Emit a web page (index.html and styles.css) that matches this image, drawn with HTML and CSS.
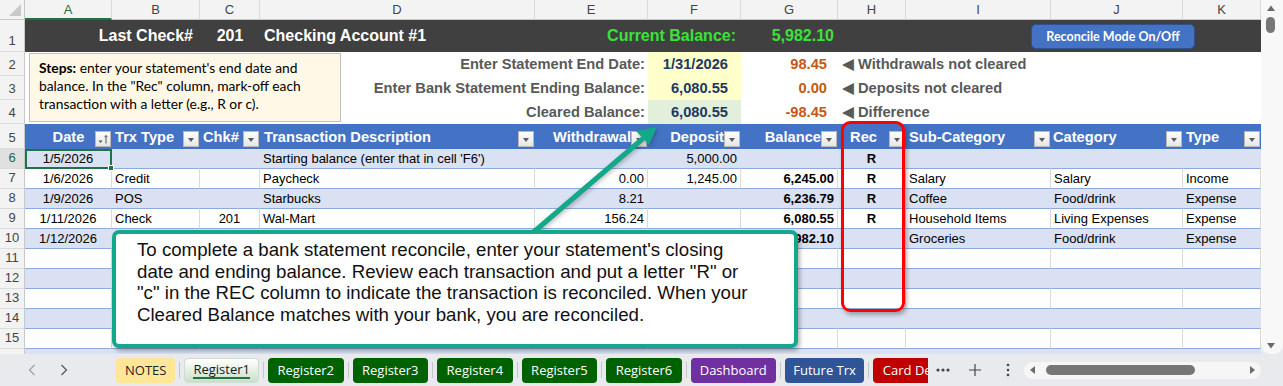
FILE: index.html
```html
<!DOCTYPE html>
<html lang="en">

<head>
    <meta charset="UTF-8">
    <meta name="viewport" content="width=device-width, initial-scale=1.0">
    <title>Checkbook Register</title>
    <link rel="stylesheet" href="styles.css">
</head>

<body>
    <div class="workbook">
        <div class="sheet-row">
            <div class="sheet">
                <table class="grid">
                    <colgroup>
                        <col class="w-rh"><col class="w-a"><col class="w-b"><col class="w-c"><col class="w-d"><col class="w-e">
                        <col class="w-f"><col class="w-g"><col class="w-h"><col class="w-i"><col class="w-j"><col class="w-k">
                    </colgroup>
                    <tr class="col-heads">
                        <th class="corner"><span class="corner-tri"></span></th>
                        <th class="cur">A</th><th>B</th><th>C</th><th>D</th><th>E</th><th>F</th>
                        <th>G</th><th>H</th><th>I</th><th>J</th><th>K</th>
                    </tr>
                    <tr class="r-title">
                        <th class="rh">1</th>
                        <td colspan="2" class="ttl-check">Last Check#</td>
                        <td class="ttl-num">201</td>
                        <td class="ttl-acct">Checking Account #1</td>
                        <td colspan="2" class="ttl-cur">Current Balance:</td>
                        <td class="ttl-bal">5,982.10</td>
                        <td></td>
                        <td colspan="3"><button class="rec-btn" type="button">Reconcile Mode On/Off</button></td>
                    </tr>
                    <tr class="r-info">
                        <th class="rh">2</th>
                        <td colspan="5" rowspan="3" class="info-left">
                            <div class="info-box">
                                <div class="steps"><b>Steps:</b> enter your statement's end date and balance. In the "Rec" column, mark-off each transaction with a letter (e.g., R or c).</div>
                                <div class="labels">
                                    <div>Enter Statement End Date:</div>
                                    <div>Enter Bank Statement Ending Balance:</div>
                                    <div>Cleared Balance:</div>
                                </div>
                            </div>
                        </td>
                        <td class="inp yellow">1/31/2026</td>
                        <td class="diff">98.45</td>
                        <td colspan="4" class="note"><span class="pointer">&#9664;</span> Withdrawals not cleared</td>
                    </tr>
                    <tr class="r-info">
                        <th class="rh">3</th>
                        <td class="inp yellow">6,080.55</td>
                        <td class="diff">0.00</td>
                        <td colspan="4" class="note"><span class="pointer">&#9664;</span> Deposits not cleared</td>
                    </tr>
                    <tr class="r-info">
                        <th class="rh">4</th>
                        <td class="inp green">6,080.55</td>
                        <td class="diff">-98.45</td>
                        <td colspan="4" class="note"><span class="pointer">&#9664;</span> Difference</td>
                    </tr>
                    <tr class="r-head">
                        <th class="rh">5</th>
                        <th><div class="hc"><span class="hc-txt t-date">Date</span><span class="fbtn sort"><svg width="14" height="14" viewBox="0 0 14 14"><path d="M2.5 8.5h4l-2 2.5z" fill="#555"/><path d="M10 3.5v8M8.6 5.2L10 3.5l1.4 1.7" stroke="#555" stroke-width="1" fill="none"/></svg></span></div></th>
                        <th><div class="hc"><span class="hc-txt t-left">Trx Type</span><span class="fbtn"></span></div></th>
                        <th><div class="hc"><span class="hc-txt t-left">Chk#</span><span class="fbtn"></span></div></th>
                        <th><div class="hc"><span class="hc-txt t-desc">Transaction Description</span><span class="fbtn"></span></div></th>
                        <th><div class="hc"><span class="hc-txt t-right">Withdrawal</span><span class="fbtn"></span></div></th>
                        <th><div class="hc"><span class="hc-txt t-right">Deposit</span><span class="fbtn"></span></div></th>
                        <th><div class="hc"><span class="hc-txt t-right">Balance</span><span class="fbtn"></span></div></th>
                        <th><div class="hc"><span class="hc-txt t-mid">Rec</span><span class="fbtn"></span></div></th>
                        <th><div class="hc"><span class="hc-txt t-left">Sub-Category</span><span class="fbtn"></span></div></th>
                        <th><div class="hc"><span class="hc-txt t-cat">Category</span><span class="fbtn"></span></div></th>
                        <th><div class="hc"><span class="hc-txt t-left">Type</span><span class="fbtn"></span></div></th>
                    </tr>
                    <tr class="r-data band">
                        <th class="rh rh-cur">6</th>
                        <td class="ctr active-cell">1/5/2026<span class="fill-handle"></span></td>
                        <td></td><td></td>
                        <td>Starting balance (enter that in cell 'F6')</td>
                        <td></td>
                        <td class="num">5,000.00</td>
                        <td></td>
                        <td class="ctr b">R</td>
                        <td></td><td></td><td></td>
                    </tr>
                    <tr class="r-data plain">
                        <th class="rh">7</th>
                        <td class="ctr">1/6/2026</td>
                        <td>Credit</td><td></td>
                        <td>Paycheck</td>
                        <td class="num">0.00</td>
                        <td class="num">1,245.00</td>
                        <td class="num b">6,245.00</td>
                        <td class="ctr b">R</td>
                        <td>Salary</td><td>Salary</td><td>Income</td>
                    </tr>
                    <tr class="r-data band">
                        <th class="rh">8</th>
                        <td class="ctr">1/9/2026</td>
                        <td>POS</td><td></td>
                        <td>Starbucks</td>
                        <td class="num">8.21</td>
                        <td></td>
                        <td class="num b">6,236.79</td>
                        <td class="ctr b">R</td>
                        <td>Coffee</td><td>Food/drink</td><td>Expense</td>
                    </tr>
                    <tr class="r-data plain">
                        <th class="rh">9</th>
                        <td class="ctr">1/11/2026</td>
                        <td>Check</td><td class="ctr">201</td>
                        <td>Wal-Mart</td>
                        <td class="num">156.24</td>
                        <td></td>
                        <td class="num b">6,080.55</td>
                        <td class="ctr b">R</td>
                        <td>Household Items</td><td>Living Expenses</td><td>Expense</td>
                    </tr>
                    <tr class="r-data band">
                        <th class="rh">10</th>
                        <td class="ctr">1/12/2026</td>
                        <td></td><td></td>
                        <td></td>
                        <td></td>
                        <td></td>
                        <td class="num b">5,982.10</td>
                        <td></td>
                        <td>Groceries</td><td>Food/drink</td><td>Expense</td>
                    </tr>
                    <tr class="r-data plain"><th class="rh">11</th><td></td><td></td><td></td><td></td><td></td><td></td><td></td><td></td><td></td><td></td><td></td></tr>
                    <tr class="r-data band"><th class="rh">12</th><td></td><td></td><td></td><td></td><td></td><td></td><td></td><td></td><td></td><td></td><td></td></tr>
                    <tr class="r-data plain"><th class="rh">13</th><td></td><td></td><td></td><td></td><td></td><td></td><td></td><td></td><td></td><td></td><td></td></tr>
                    <tr class="r-data band"><th class="rh">14</th><td></td><td></td><td></td><td></td><td></td><td></td><td></td><td></td><td></td><td></td><td></td></tr>
                    <tr class="r-data plain"><th class="rh">15</th><td></td><td></td><td></td><td></td><td></td><td></td><td></td><td></td><td></td><td></td><td></td></tr>
                    <tr class="r-data band"><th class="rh"></th><td></td><td></td><td></td><td></td><td></td><td></td><td></td><td></td><td></td><td></td><td></td></tr>
                </table>

                <!-- callout pointing at the cleared balance -->
                <svg class="arrow" width="1261" height="354" viewBox="0 0 1261 354">
                    <line x1="529" y1="236" x2="643" y2="138.5" stroke="#13a88a" stroke-width="5"/>
                    <polygon points="657,127 649,145 636,131" fill="#13a88a"/>
                </svg>
                <div class="red-box"></div>
                <div class="callout">To complete a bank statement reconcile, enter your statement's closing date and ending balance. Review each transaction and put a letter "R" or "c" in the REC column to indicate the transaction is reconciled. When your Cleared Balance matches with your bank, you are reconciled.</div>
            </div>
            <div class="vscroll">
                <svg class="vs-up" width="10" height="8" viewBox="0 0 10 8"><path d="M1 7L5 1.5L9 7z" fill="#6b6b6b"/></svg>
                <div class="vs-thumb"></div>
                <svg class="vs-down" width="10" height="8" viewBox="0 0 10 8"><path d="M1 1L5 6.5L9 1z" fill="#6b6b6b"/></svg>
            </div>
        </div>

        <div class="tabbar">
            <div class="tab-nav">
                <svg width="8" height="12" viewBox="0 0 8 12"><path d="M6.5 1L1.5 6l5 5" stroke="#a0a0a0" stroke-width="1.2" fill="none"/></svg>
                <svg width="8" height="12" viewBox="0 0 8 12"><path d="M1.5 1l5 5-5 5" stroke="#555" stroke-width="1.2" fill="none"/></svg>
            </div>
            <div class="tabs">
                <span class="tab t-notes">NOTES</span><span class="sep"></span>
                <span class="tab t-active">Register1</span><span class="sep"></span>
                <span class="tab t-reg">Register2</span><span class="sep"></span>
                <span class="tab t-reg">Register3</span><span class="sep"></span>
                <span class="tab t-reg">Register4</span><span class="sep"></span>
                <span class="tab t-reg">Register5</span><span class="sep"></span>
                <span class="tab t-reg">Register6</span><span class="sep"></span>
                <span class="tab t-dash">Dashboard</span><span class="sep"></span>
                <span class="tab t-future">Future Trx</span><span class="sep"></span>
                <span class="tab t-card">Card Debt</span>
            </div>
            <div class="tab-tools">
                <svg width="96" height="20" viewBox="0 0 96 20">
                    <circle cx="10" cy="10" r="1.6" fill="#444"/><circle cx="15" cy="10" r="1.6" fill="#444"/><circle cx="20" cy="10" r="1.6" fill="#444"/>
                    <path d="M47 4v12M41 10h12" stroke="#444" stroke-width="1.2"/>
                    <circle cx="80" cy="5" r="1.3" fill="#444"/><circle cx="80" cy="10" r="1.3" fill="#444"/><circle cx="80" cy="15" r="1.3" fill="#444"/>
                </svg>
            </div>
            <div class="hscroll">
                <svg width="8" height="10" viewBox="0 0 8 10"><path d="M6 1L1 5l5 4z" fill="#6b6b6b"/></svg>
                <div class="hs-thumb"></div>
                <svg width="8" height="10" viewBox="0 0 8 10"><path d="M2 1l5 4-5 4z" fill="#6b6b6b"/></svg>
            </div>
        </div>
    </div>
</body>

</html>
```

FILE: styles.css
```css
* {
    box-sizing: border-box;
}

body {
    margin: 0;
    background-color: #e9eaed;
    font-family: "Liberation Sans", Arial, sans-serif;
}

.workbook {
    width: 1283px;
    height: 386px;
    overflow: hidden;
}

.sheet-row {
    display: flex;
    height: 354px;
}

.sheet {
    position: relative;
    width: 1261px;
    height: 354px;
    overflow: hidden;
    background-color: #fff;
}

/* grid */
.grid {
    table-layout: fixed;
    width: 1261px;
    border-collapse: separate;
    border-spacing: 0;
}

.grid td,
.grid th {
    padding: 0;
    white-space: nowrap;
}

.w-rh { width: 25px; }
.w-a { width: 87px; }
.w-b { width: 88px; }
.w-c { width: 60px; }
.w-d { width: 275px; }
.w-e { width: 113px; }
.w-f { width: 93px; }
.w-g { width: 97px; }
.w-h { width: 68px; }
.w-i { width: 145px; }
.w-j { width: 132px; }
.w-k { width: 78px; }

.col-heads th {
    height: 20px;
    background-color: #f3f3f3;
    border-right: 1px solid #dadada;
    border-bottom: 1px solid #c8c8c8;
    color: #444;
    font-weight: normal;
    font-size: 13px;
    text-align: center;
}

.col-heads th.cur {
    color: #1d6b40;
    border-bottom: 2px solid #217346;
}

.grid th.corner {
    vertical-align: bottom;
    border-right: 1px solid #c8c8c8;
}

.corner-tri {
    display: block;
    width: 0;
    height: 0;
    margin: 0 3px 3px auto;
    border-left: 12px solid transparent;
    border-bottom: 12px solid #c9c9c9;
}

.grid .rh {
    background-color: #f3f3f3;
    border-right: 1px solid #c8c8c8;
    border-bottom: 1px solid #dcdcdc;
    color: #444;
    font-weight: normal;
    font-size: 13px;
    line-height: 16px;
    vertical-align: bottom;
    padding-bottom: 2px;
    text-align: center;
}

.grid .rh-cur {
    background-color: #e0e0e0;
    color: #1d6b40;
}

/* row 1 */
.r-title td {
    height: 32px;
    background-color: #404040;
    color: #fff;
    font-weight: bold;
    font-size: 16px;
}

.grid .ttl-check {
    text-align: right;
    padding-right: 7px;
}

.ttl-num {
    text-align: center;
}

.grid .ttl-acct {
    padding-left: 4px;
}

.grid .ttl-cur {
    text-align: right;
    padding-right: 5px;
    color: #3ae23a;
}

.grid .ttl-bal {
    text-align: right;
    padding-right: 4px;
    color: #3ae23a;
}

.rec-btn {
    display: block;
    margin-left: 125px;
    width: 164px;
    height: 25px;
    padding: 0;
    background-color: #4472c4;
    border: 1px solid #2f528f;
    border-radius: 5px;
    color: #fff;
    font-family: Lato, "Liberation Sans", sans-serif;
    font-weight: bold;
    font-size: 12.5px;
}

/* rows 2-4 */
.r-info td {
    height: 24px;
    font-size: 14.67px;
    font-weight: bold;
}

.grid .info-left {
    vertical-align: top;
}

.info-box {
    display: flex;
    align-items: flex-start;
}

.steps {
    flex: none;
    width: 312px;
    height: 69px;
    margin: 1px 0 0 4px;
    padding: 5px 9px 0;
    background-color: #fff8e6;
    border: 1px solid #c0c0c0;
    font-family: Lato, "Liberation Sans", sans-serif;
    font-weight: normal;
    font-size: 13.8px;
    line-height: 18px;
    color: #000;
    white-space: normal;
}

.labels {
    flex: 1;
    text-align: right;
    padding-right: 3px;
    color: #595959;
}

.labels div {
    height: 24px;
    line-height: 24px;
}

.grid .inp {
    text-align: right;
    padding-right: 13px;
    color: #203864;
}

.yellow {
    background-color: #ffffcc;
}

.green {
    background-color: #e2efda;
}

.grid .diff {
    text-align: right;
    padding-right: 11px;
    color: #c65911;
}

.grid .note {
    padding-left: 4px;
    color: #595959;
}

.pointer {
    font-family: "DejaVu Sans", sans-serif;
    font-size: 15.5px;
    line-height: 16px;
}

/* table header */
.r-head th {
    height: 25px;
    background-color: #4472c4;
    color: #fff;
    font-size: 14.67px;
    font-weight: bold;
}

.hc {
    display: flex;
    align-items: center;
    height: 25px;
}

.hc-txt {
    flex: 1;
    text-align: left;
}

.t-date {
    text-align: center;
    padding-left: 17px;
}

.t-left {
    padding-left: 3px;
}

.t-desc {
    padding-left: 4px;
}

.t-cat {
    padding-left: 2px;
}

.t-right {
    text-align: right;
}

.t-mid {
    text-align: center;
}

.fbtn {
    flex: none;
    align-self: flex-end;
    position: relative;
    width: 16px;
    height: 16px;
    margin: 0 1px 2px 0;
    background: linear-gradient(#fdfdfd, #e6e6e6);
    border: 1px solid #b8b8b8;
}

.fbtn::after {
    content: "";
    position: absolute;
    left: 4px;
    top: 6px;
    border-left: 3.5px solid transparent;
    border-right: 3.5px solid transparent;
    border-top: 4px solid #5c5c5c;
}

.fbtn.sort::after {
    display: none;
}

.fbtn svg {
    display: block;
}

/* data rows */
.r-data td {
    height: 20px;
    padding: 0 3px;
    font-size: 13px;
    color: #000;
    border-bottom: 1px solid #8ea9db;
}

.r-data.plain td {
    background-color: #fff;
    border-right: 1px solid #dadada;
}

.r-data.band td {
    background-color: #d9e1f2;
    border-right: 1px solid #d9e1f2;
}

.grid .num {
    text-align: right;
}

.grid .ctr {
    text-align: center;
}

.b {
    font-weight: bold;
}

.grid .active-cell {
    position: relative;
    outline: 2px solid #217346;
    outline-offset: -2px;
}

.fill-handle {
    position: absolute;
    right: -3px;
    bottom: -3px;
    width: 6px;
    height: 6px;
    background-color: #217346;
    border: 1px solid #fff;
}

/* overlays */
.arrow {
    position: absolute;
    left: 0;
    top: 0;
    filter: drop-shadow(1px 2px 2px rgba(0, 0, 0, 0.25));
}

.red-box {
    position: absolute;
    left: 841px;
    top: 121px;
    width: 64px;
    height: 191px;
    border: 3px solid #ff0000;
    border-radius: 9px;
    box-shadow: 2px 3px 4px rgba(0, 0, 0, 0.3);
}

.callout {
    position: absolute;
    left: 112px;
    top: 230px;
    width: 686px;
    height: 118px;
    padding: 5px 36px 0 21px;
    background-color: #fff;
    border: 4px solid #13a88a;
    border-radius: 7px;
    box-shadow: 2px 3px 4px rgba(0, 0, 0, 0.3);
    font-size: 18.67px;
    line-height: 21.5px;
    color: #111;
}

/* vertical scrollbar */
.vscroll {
    width: 22px;
    display: flex;
    flex-direction: column;
    align-items: center;
    padding: 4px 3px 4px 0;
    background-color: #f8f8f8;
    border-radius: 0 0 9px 9px;
}

.vs-thumb {
    width: 9px;
    height: 16px;
    margin-top: 5px;
    border-radius: 5px;
    background-color: #767676;
}

.vs-down {
    margin-top: auto;
}

/* sheet tabs */
.tabbar {
    display: flex;
    align-items: center;
    height: 32px;
}

.tab-nav {
    flex: none;
    width: 116px;
    display: flex;
    gap: 24px;
    padding-left: 28px;
}

.tabs {
    flex: none;
    width: 812px;
    display: flex;
    align-items: center;
    overflow: hidden;
}

.tab {
    flex: none;
    height: 25px;
    line-height: 25px;
    padding: 0 9.5px;
    border-radius: 4px;
    font-family: "Open Sans", sans-serif;
    font-size: 13px;
    white-space: nowrap;
    color: #fff;
}

.sep {
    flex: none;
    width: 1px;
    height: 16px;
    margin: 0 4px;
    background-color: #c4c6ca;
}

.t-notes {
    padding: 0 9px;
    background-color: #ffe699;
    color: #222;
}

.t-active {
    position: relative;
    padding: 0 8px;
    background: linear-gradient(#ffffff, #c9e0c9);
    border: 1px solid #d0dcd0;
    line-height: 21px;
    color: #1a1a1a;
    font-weight: 500;
}

.t-active::after {
    content: "";
    position: absolute;
    left: 8px;
    right: 8px;
    bottom: 3px;
    height: 2px;
    background-color: #217346;
}

.t-reg {
    background-color: #006100;
}

.t-dash {
    padding: 0 9px;
    background-color: #7030a0;
}

.t-future {
    padding: 0 8.5px;
    background-color: #2f5597;
}

.t-card {
    background-color: #c00000;
}

.tab-tools {
    flex: none;
    width: 96px;
}

.tab-tools svg {
    display: block;
}

.hscroll {
    flex: none;
    width: 237px;
    height: 17px;
    display: flex;
    align-items: center;
    padding: 0 5px;
    background-color: #f6f6f6;
    border-radius: 9px;
}

.hs-thumb {
    width: 149px;
    height: 10px;
    margin: 0 auto 0 9px;
    border-radius: 5px;
    background-color: #767676;
}
```
